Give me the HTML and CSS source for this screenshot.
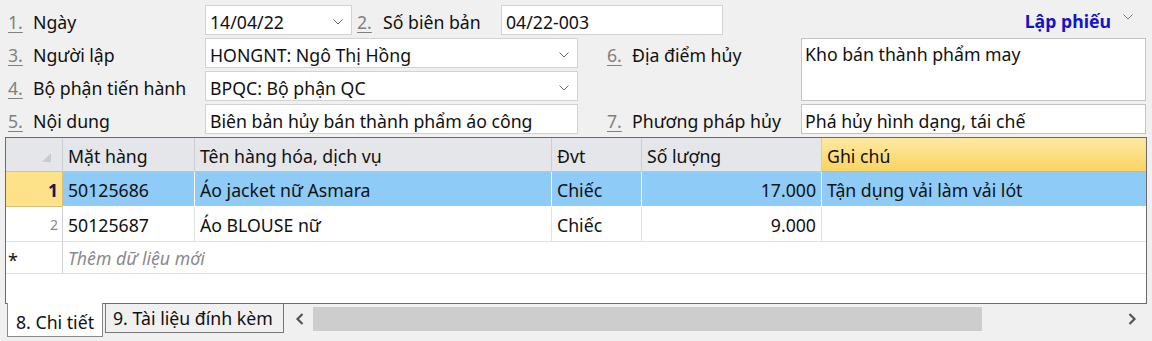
FILE: index.html
```html
<!DOCTYPE html>
<html lang="vi">
<head>
<meta charset="utf-8">
<link rel="stylesheet" href="styles.css">
</head>
<body>
<div class="form">
  <div class="lbl"><span class="num">1.</span>Ngày</div>
  <div class="row1">
    <div class="inp date">14/04/22<svg class="chev" width="10" height="6" viewBox="0 0 10 6"><path d="M0.5 0.5 L5 5 L9.5 0.5" fill="none" stroke="#666" stroke-width="1"/></svg></div>
    <div class="lbl lbl2"><span class="num">2.</span>Số biên bản</div>
    <div class="inp sobb">04/22-003</div>
  </div>
  <div class="lapphieu"><span class="lp-text">Lập phiếu</span><svg class="lp-chev" width="10" height="6" viewBox="0 0 10 6"><path d="M0.5 0.5 L5 5 L9.5 0.5" fill="none" stroke="#777" stroke-width="1"/></svg></div>

  <div class="lbl"><span class="num">3.</span>Người lập</div>
  <div class="inp combo">HONGNT: Ngô Thị Hồng<svg class="chev" width="10" height="6" viewBox="0 0 10 6"><path d="M0.5 0.5 L5 5 L9.5 0.5" fill="none" stroke="#666" stroke-width="1"/></svg></div>
  <div class="lbl lbl-r"><span class="num">6.</span>Địa điểm hủy</div>
  <div class="inp area">Kho bán thành phẩm may</div>

  <div class="lbl r3"><span class="num">4.</span>Bộ phận tiến hành</div>
  <div class="inp combo r3">BPQC: Bộ phận QC<svg class="chev" width="10" height="6" viewBox="0 0 10 6"><path d="M0.5 0.5 L5 5 L9.5 0.5" fill="none" stroke="#666" stroke-width="1"/></svg></div>

  <div class="lbl r4 c1"><span class="num">5.</span>Nội dung</div>
  <div class="inp r4 c2">Biên bản hủy bán thành phẩm áo công</div>
  <div class="lbl lbl-r r4 c3"><span class="num">7.</span>Phương pháp hủy</div>
  <div class="inp tall r4 c4">Phá hủy hình dạng, tái chế</div>
</div>

<div class="grid">
  <div class="grow ghead">
    <div class="c rh corner"><svg width="11" height="11" viewBox="0 0 11 11"><path d="M10 1 L10 10 L1 10 Z" fill="#c9cbce"/></svg></div>
    <div class="c">Mặt hàng</div>
    <div class="c">Tên hàng hóa, dịch vụ</div>
    <div class="c">Đvt</div>
    <div class="c">Số lượng</div>
    <div class="c ghichu">Ghi chú</div>
  </div>
  <div class="grow gsel">
    <div class="c rh rhsel">1</div>
    <div class="c">50125686</div>
    <div class="c">Áo jacket nữ Asmara</div>
    <div class="c">Chiếc</div>
    <div class="c num-r">17.000</div>
    <div class="c">Tận dụng vải làm vải lót</div>
  </div>
  <div class="grow">
    <div class="c rh rhn">2</div>
    <div class="c">50125687</div>
    <div class="c">Áo BLOUSE nữ</div>
    <div class="c">Chiếc</div>
    <div class="c num-r">9.000</div>
    <div class="c"></div>
  </div>
  <div class="grow gnew">
    <div class="c rh rhstar">*</div>
    <div class="c newtext">Thêm dữ liệu mới</div>
  </div>
</div>

<div class="bottom">
  <div class="tab active">8. Chi tiết</div>
  <div class="tab">9. Tài liệu đính kèm</div>
  <div class="scroll">
    <svg class="sarrow" width="10" height="12" viewBox="0 0 10 12"><path d="M7.5 1 L2.5 6 L7.5 11" fill="none" stroke="#555" stroke-width="2.2"/></svg>
    <div class="track"><div class="thumb"></div></div>
    <svg class="sarrow" width="10" height="12" viewBox="0 0 10 12"><path d="M2.5 1 L7.5 6 L2.5 11" fill="none" stroke="#555" stroke-width="2.2"/></svg>
  </div>
</div>
</body>
</html>
```

FILE: styles.css
```css
* { box-sizing: border-box; }
html, body { margin: 0; padding: 0; }
body {
  width: 1152px;
  height: 341px;
  overflow: hidden;
  background: #f0f0f0;
  font-family: "Noto Sans", "Open Sans", sans-serif;
  font-size: 17.7px;
  color: #111;
}
.form {
  display: grid;
  grid-template-columns: 205px 373px 223px 345px;
  grid-template-rows: repeat(4, 30px);
  row-gap: 3px;
  padding-top: 5px;
}
.r3 { grid-row: 3; }
.r4 { grid-row: 4; }
.c1 { grid-column: 1; }
.c2 { grid-column: 2; }
.c3 { grid-column: 3; }
.c4 { grid-column: 4; }
.lbl {
  display: flex;
  align-items: center;
  padding-left: 8px;
  padding-top: 4px;
  white-space: nowrap;
}
.num {
  display: inline-block;
  width: 25px;
  color: #808080;
  text-decoration: underline;
  text-underline-offset: 3px;
}
.lbl-r { padding-left: 29px; }
.row1 {
  grid-column: 2 / 4;
  display: flex;
}
.lbl2 { width: 149px; padding-left: 5px; }
.lbl2 .num { width: 26px; }
.inp {
  position: relative;
  background: #fff;
  border: 1px solid #d2d2d2;
  display: flex;
  align-items: center;
  padding: 4px 4px 0 4px;
  white-space: nowrap;
  overflow: hidden;
}
.date { width: 147px; }
.sobb { width: 222px; }
.chev { position: absolute; right: 8px; top: 13px; }
.lapphieu {
  display: flex;
  align-items: center;
  justify-content: flex-end;
  padding-right: 13px;
  padding-top: 2px;
}
.lp-text { color: #1414c8; font-weight: bold; }
.lp-chev { margin-left: 12px; margin-bottom: 8px; }
.area {
  grid-row: 2 / 4;
  grid-column: 4;
  align-items: flex-start;
  padding: 3px 3px;
  border-color: #c4c4c4;
}
.tall { border-color: #c4c4c4; padding-left: 3px; }

.grid {
  margin: 3px 5px 0 5px;
  height: 167px;
  border: 1px solid #6b6b6b;
  background: #fff;
  position: relative;
  z-index: 1;
}
.grow {
  display: grid;
  grid-template-columns: 57px 132px 357px 90px 180px 1fr;
  height: 35px;
}
.c {
  display: flex;
  align-items: center;
  padding: 1px 5px 0 5px;
  border-right: 1px solid #e2e2e2;
  border-bottom: 1px solid #e2e2e2;
  white-space: nowrap;
  overflow: hidden;
}
.grow .c:last-child { border-right: none; }
.ghead { height: 34px; }
.ghead .c {
  background: #e4e6ea;
  border-right-color: #cbced2;
  border-bottom-color: #c2c4c8;
  padding-top: 2px;
}
.ghead .corner { justify-content: flex-end; padding-right: 10px; padding-top: 6px; }
.ghead .ghichu {
  background: linear-gradient(#fde9a3, #fbd461);
  border-bottom-color: #d9b95a;
}
.gsel .c {
  background: #8ecbf7;
  border-right-color: #ffffff;
  border-bottom-color: #ffffff;
}
.gsel .rh.rhsel {
  background: #fde289;
  border-right-color: #d8c27a;
  border-bottom-color: #d8c27a;
  justify-content: flex-end;
  font-weight: bold;
  color: #14195c;
  padding-right: 4px;
}
.rh { border-right-color: #cfd1d4; }
.rhn {
  justify-content: flex-end;
  color: #8a8a8a;
  font-size: 14px;
  padding-right: 4px;
}
.num-r { justify-content: flex-end; }
.gnew { height: 32px; grid-template-columns: 57px 1fr; }
.gnew .c:last-child { border-right: none; }
.rhstar { padding-left: 2px; font-size: 18px; padding-top: 5px; }
.newtext { font-style: italic; color: #8a8a8a; border-right: none; }

.bottom {
  display: flex;
  align-items: flex-start;
  padding-left: 7px;
}
.tab {
  height: 29px;
  width: 179px;
  padding: 0 0 0 7px;
  display: flex;
  align-items: center;
  border: 1px solid #777;
  border-top: none;
  background: #f0f0f0;
  margin-left: 2px;
  white-space: nowrap;
}
.tab.active {
  background: #fff;
  height: 34px;
  width: 96px;
  margin-left: 0;
  margin-top: -1px;
  position: relative;
  z-index: 2;
  border-color: #8a8a8a;
  padding-top: 4px;
  padding-left: 8px;
}
.scroll {
  flex: 1;
  display: flex;
  align-items: center;
  height: 28px;
  margin-top: 1px;
  padding-left: 11px;
  padding-right: 15px;
}
.sarrow { flex: none; }
.track {
  flex: 1;
  height: 24px;
  margin: 0 8px 0 8px;
}
.thumb { height: 100%; width: 669px; background: #cdcdcd; }
```
